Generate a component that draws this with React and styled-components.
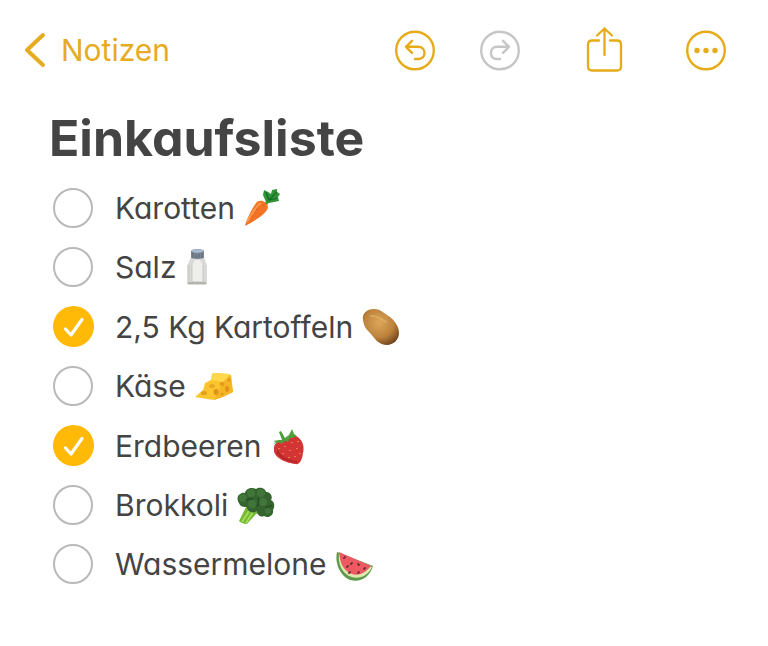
import React, { useState } from "react";
import styled, { createGlobalStyle } from "styled-components";

const GlobalStyle = createGlobalStyle`
  * {
    box-sizing: border-box;
  }
  body {
    margin: 0;
    background-color: #ffffff;
    color: #444444;
    font-family: Inter, "Liberation Sans", sans-serif;
    font-feature-settings: "cv11";
  }
`;

const Container = styled.div`
  padding: 27px 24px 40px;
`;
const Header = styled.header`
  display: flex;
  align-items: center;
  justify-content: space-between;
  padding-right: 18px;
`;
const BackLink = styled.a`
  display: flex;
  align-items: center;
  gap: 15px;
  color: #e6ab20;
  font-size: 30px;
  line-height: 46px;
  text-decoration: none;
`;
const Toolbar = styled.div`
  display: flex;
  align-items: center;
  gap: 63px;
`;
const History = styled.div`
  display: flex;
  gap: 45px;
`;
const IconButton = styled.button`
  display: flex;
  padding: 0;
  border: none;
  background: none;
  color: #e6ab17;
  cursor: pointer;

  &:disabled {
    color: #c6c6c6;
    cursor: default;
  }
`;
const Icon = styled.svg`
  display: block;
  fill: none;
  stroke: currentColor;
  stroke-linecap: round;
  stroke-linejoin: round;
`;
const Main = styled.main`
  padding: 0 25px;
`;
const Title = styled.h1`
  margin: 35px 0 20px;
  font-size: 50px;
  font-weight: 700;
  line-height: 60px;
`;
const List = styled.ul`
  display: flex;
  flex-direction: column;
  gap: 19px;
  margin: 0;
  padding: 0 4px;
  list-style: none;
`;
const Item = styled.li`
  display: flex;
`;
const Label = styled.label`
  display: grid;
  grid-template-columns: 41px auto 40px;
  align-items: center;
  cursor: pointer;
`;
const Checkbox = styled.input`
  appearance: none;
  grid-area: 1 / 1;
  width: 40px;
  height: 40px;
  margin: 0;
  border: 2px solid #b9b9b9;
  border-radius: 50%;
  cursor: pointer;

  &:checked {
    width: 41px;
    height: 41px;
    border: none;
    background-color: #ffb906;
  }
`;
const Check = styled(Icon)`
  grid-area: 1 / 1;
  color: #ffffff;
  pointer-events: none;
`;
const ItemText = styled.span`
  margin: 0 8px 0 21px;
  font-size: 30px;
  line-height: 40px;
`;
const Picture = styled.svg`
  display: block;
`;

const Carrot = () => (
  <>
    <path d="M22 17L27 11" stroke="#3f9b3c" strokeWidth="3" />
    <path d="M23 14L20 7L21 2L25 4L28 6L29 2L34 1L34 4L37 6L35 9L36 13L31 14L26 15Z" fill="#2f9436" />
    <path d="M23 4L26 12L34 4M27 12L34 10" stroke="#176b2a" strokeWidth="1.3" fill="none" />
    <path d="M2 38C3 32 10 18 14 14C18 11 24 14 25 19C25 24 14 32 2 38Z" fill="#f27324" />
    <path d="M4 34C9 25 13 18 18 15" stroke="#ff9b50" strokeWidth="2" fill="none" />
    <path d="M8 28L10 29M13 21L15 22M17 26L18 27M19 17L21 18" stroke="#dc5b1a" strokeWidth="0.7" />
  </>
);

const Salt = () => (
  <>
    <path d="M7 10H20L23 19V36Q23 38 20 38H6Q3 38 3 36V19Z" fill="#d9dad8" />
    <path d="M8 18L11 13H16L19 18V34H8Z" fill="#eeeeeb" />
    <path d="M5 18V34M8 18V35M19 18V35" stroke="#bfc2c0" strokeWidth="0.8" />
    <path d="M4 36H22" stroke="#aaa69f" strokeWidth="1.5" />
    <path d="M7 4Q8 2 13.500 2Q19 2 20 4V11Q13 13 7 11Z" fill="#7b8792" />
    <ellipse cx="13.500" cy="4" rx="5.500" ry="1.700" fill="#a8bfd3" />
    <path d="M9 6V11M12 7V11M15 7V11M18 6V11" stroke="#57616b" strokeWidth="0.8" />
  </>
);

const Potato = () => (
  <>
    <defs>
      <radialGradient id="potato" cx="0.45" cy="0.38" r="0.68">
        <stop offset="0" stopColor="#dca65a" />
        <stop offset="0.6" stopColor="#bd823b" />
        <stop offset="1" stopColor="#6f431b" />
      </radialGradient>
    </defs>
    <path d="M2 13C1 6 6 2 13 2C20 2 24 7 29 10C34 14 38 20 38 26C38 33 32 38 26 38C18 38 14 32 10 27C6 23 3 20 2 13Z" fill="url(#potato)" />
    <path d="M10 9C16 8 20 12 25 15" stroke="#e5b66d" strokeWidth="2" strokeLinecap="round" fill="none" opacity="0.6" />
  </>
);

const Cheese = () => (
  <>
    <path d="M1 31L9 24L11 17L17 14L18 8Q19 7 21 7L35 8Q38 9 37 13L39 26L28 31L20 34L7 32Z" fill="#fcc52f" />
    <path d="M17 14L19 7L36 8L29 16Z" fill="#ffd84c" />
    <path d="M29 16L37 9L39 26L29 31L20 34Z" fill="#f5b524" />
    <ellipse cx="10" cy="27" rx="3" ry="2" fill="#e39f1c" />
    <ellipse cx="18" cy="20" rx="3" ry="2" fill="#e8a822" />
    <ellipse cx="22" cy="26" rx="2.500" ry="3" fill="#de9518" />
    <ellipse cx="28" cy="18" rx="2.500" ry="2" fill="#e39c1a" />
    <ellipse cx="33" cy="23" rx="2" ry="3" fill="#de9318" />
    <circle cx="35" cy="14" r="1.700" fill="#e19a18" />
    <circle cx="28" cy="28" r="1.500" fill="#df9817" />
  </>
);

const Strawberry = () => (
  <>
    <path d="M4 21C5 16 10 15 15 13C19 11 22 7 26 10C32 13 35 20 33 27C32 34 30 39 25 38C18 37 5 33 4 25Z" fill="#d33534" />
    <path d="M7 25C10 32 18 35 27 36" stroke="#b9252b" strokeWidth="2" fill="none" />
    <path d="M3 15L9 14L12 14L9 6L11 5L15 12L19 9L22 3L24 8L27 10L22 12L20 12L18 16L15 15L11 18L10 16L3 18L6 16Z" fill="#4f9e3c" />
    <path d="M9 22V23M15 20V21M22 16V17M28 15V16M13 27V28M20 24V25M27 22V23M30 27V28M19 31V32M25 30V31" stroke="#eda558" strokeWidth="1.300" />
  </>
);

const Broccoli = () => (
  <>
    <path d="M10 22L3 36Q6 39 11 39L20 29L27 27L25 21Z" fill="#75b936" />
    <path d="M13 26L6 37M17 27L10 38" stroke="#a5dc59" strokeWidth="1.800" />
    <path d="M3 18C-1 12 4 7 9 8C10 3 16 2 20 4C24 1 30 4 30 7C35 7 37 12 35 15C40 18 38 23 37 25C38 30 33 34 28 31C24 33 21 29 21 26C17 29 11 27 11 22C8 22 4 22 3 18Z" fill="#35642e" />
    <g fill="#42753a">
      <circle cx="7" cy="13" r="4" />
      <circle cx="15" cy="8" r="4" />
      <circle cx="25" cy="8" r="4" />
      <circle cx="16" cy="19" r="4" />
      <circle cx="27" cy="17" r="4" />
      <circle cx="32" cy="26" r="3" />
    </g>
    <path d="M10 15Q14 13 17 14M22 13Q24 17 21 22M29 22Q34 22 36 20" stroke="#264e26" strokeWidth="1.500" fill="none" />
  </>
);

const Watermelon = () => (
  <>
    <path d="M2 8C0 17 3 27 10 33C20 41 34 36 38 22Z" fill="#5d9a4b" />
    <path d="M4 9C3 17 5 25 11 30C20 37 32 34 37 23Z" fill="#dce9ad" />
    <path d="M4 8C5 17 7 24 13 28C20 33 29 31 36 22Z" fill="#ee5962" />
    <path d="M9 14L10 13M16 20L17 19M23 20L24 21M12 23L13 22M14 29L15 28M23 29L24 28M29 25L30 24" stroke="#6b3038" strokeWidth="1.800" strokeLinecap="round" />
  </>
);

const groceries = [
  { id: 1, text: "Karotten", alt: "Karotte", Art: Carrot, done: false },
  { id: 2, text: "Salz", alt: "Salzstreuer", Art: Salt, done: false },
  { id: 3, text: "2,5 Kg Kartoffeln", alt: "Kartoffel", Art: Potato, done: true },
  { id: 4, text: "Käse", alt: "Käse", Art: Cheese, done: false },
  { id: 5, text: "Erdbeeren", alt: "Erdbeere", Art: Strawberry, done: true },
  { id: 6, text: "Brokkoli", alt: "Brokkoli", Art: Broccoli, done: false },
  { id: 7, text: "Wassermelone", alt: "Wassermelone", Art: Watermelon, done: false },
];

const App = () => {
  const [items, setItems] = useState(groceries);

  const toggle = (id) => {
    setItems(items.map((item) => (item.id === id ? { ...item, done: !item.done } : item)));
  };

  return (
    <Container>
      <GlobalStyle />
      <Header>
        <BackLink href="#notizen">
          <Icon width="22" height="36" viewBox="0 0 22 36" strokeWidth="4">
            <path d="M19 3L3 18L19 33" />
          </Icon>
          Notizen
        </BackLink>
        <Toolbar>
          <History>
            <IconButton type="button" aria-label="Widerrufen">
              <Icon width="40" height="46" viewBox="0 0 40 46" strokeWidth="2.4">
                <circle cx="20" cy="23.500" r="18.800" />
                <path d="M17 13.800L11 19.800L17 25.800M11 19.800H23C27 19.800 29.500 22.300 29.500 26C29.500 29.500 27 32 23 32H20" />
              </Icon>
            </IconButton>
            <IconButton type="button" aria-label="Wiederholen" disabled>
              <Icon width="40" height="46" viewBox="0 0 40 46" strokeWidth="2.4">
                <circle cx="20" cy="23.500" r="18.800" />
                <path d="M23 13.800L29 19.800L23 25.800M29 19.800H17C13 19.800 11 22.300 11 26C11 29.500 13 32 17 32H20" />
              </Icon>
            </IconButton>
          </History>
          <IconButton type="button" aria-label="Teilen">
            <Icon width="40" height="46" viewBox="0 0 40 46" strokeWidth="2.3">
              <path d="M16 13.500H9Q5 13.500 5 17.500V39.500Q5 43.500 9 43.500H34Q38 43.500 38 39.500V17.500Q38 13.500 34 13.500H27" />
              <path d="M21.500 28V1.500M14 8.500L21.500 1.500L29 8.500" />
            </Icon>
          </IconButton>
          <IconButton type="button" aria-label="Mehr">
            <Icon width="40" height="46" viewBox="0 0 40 46" strokeWidth="2.4">
              <circle cx="20" cy="23.500" r="18.800" />
              <g fill="currentColor" stroke="none">
                <circle cx="11" cy="23.500" r="2.700" />
                <circle cx="20" cy="23.500" r="2.700" />
                <circle cx="29" cy="23.500" r="2.700" />
              </g>
            </Icon>
          </IconButton>
        </Toolbar>
      </Header>

      <Main>
        <Title>Einkaufsliste</Title>
        <List>
          {items.map(({ id, text, alt, Art, done }) => (
            <Item key={id}>
              <Label>
                <Checkbox type="checkbox" checked={done} onChange={() => toggle(id)} />
                {done && (
                  <Check width="41" height="41" viewBox="0 0 41 41" strokeWidth="3.2">
                    <path d="M12.500 23L18 29L29 13.500" />
                  </Check>
                )}
                <ItemText>{text}</ItemText>
                <Picture width="40" height="40" viewBox="0 0 40 40" role="img" aria-label={alt}>
                  <Art />
                </Picture>
              </Label>
            </Item>
          ))}
        </List>
      </Main>
    </Container>
  );
};

export default App;
